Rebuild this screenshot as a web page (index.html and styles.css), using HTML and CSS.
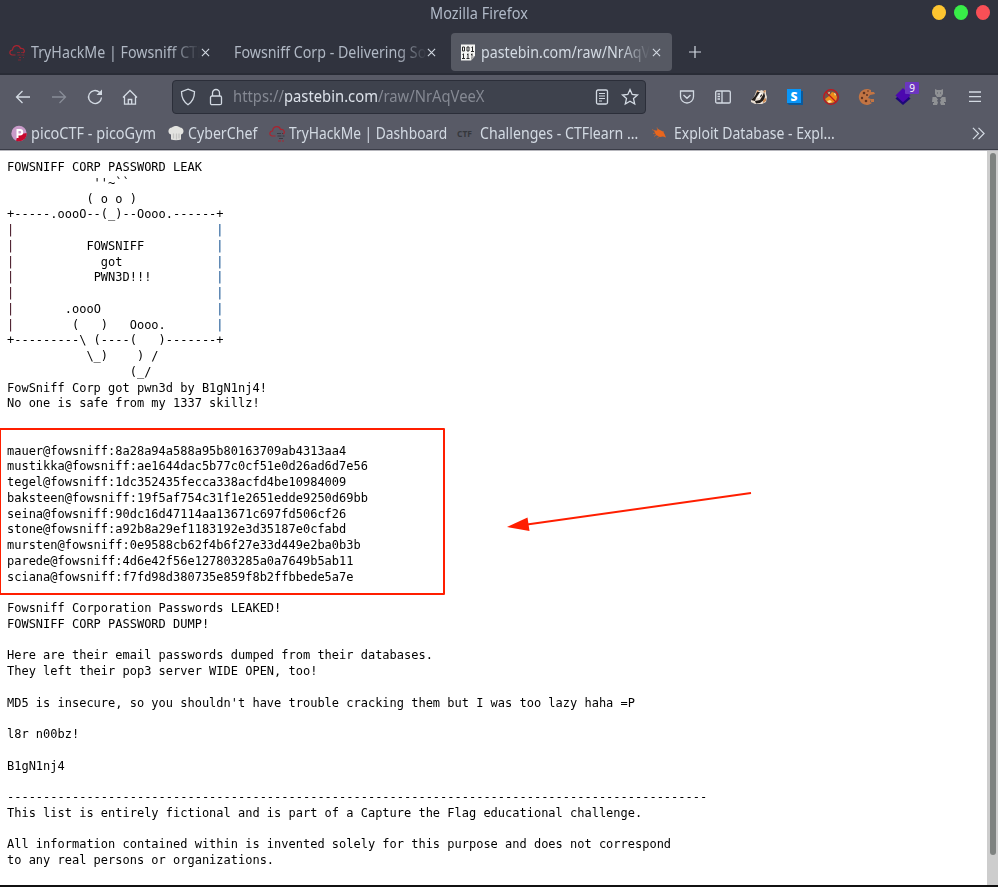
FILE: index.html
```html
<!DOCTYPE html>
<html lang="en">
<head>
<meta charset="utf-8">
<title>Mozilla Firefox</title>
<link rel="stylesheet" href="styles.css">
</head>
<body>
<div class="window">
  <header class="titlebar">
    <span class="title"><span class="t">Mozilla Firefox</span></span>
    <div class="lights"><i class="min"></i><i class="max"></i><i class="close"></i></div>
  </header>

  <nav class="tabs">
    <div class="tab tab-thm">
      <svg class="fav" viewBox="0 0 16 16"><g fill="none" stroke="#a82430" stroke-width="1.200"><path d="M6.500 10.500H3.500C-.2 10.500.2 5.500 3.500 5.500 4 0 10.500-.3 11.500 4 15.500 3.500 16.500 7.500 14 8.500"/><path stroke="#7d2833" d="M8 8h6M8.500 10.500h7M10 13h2m2 0h1M9 15.500h3" stroke-dasharray="3 1"/></g></svg>
      <span class="label"><span class="t">TryHackMe | Fowsniff CTF</span></span>
      <svg class="x" viewBox="0 0 10 10"><path d="M1 1l8 8M9 1l-8 8"/></svg>
    </div>
    <div class="tab tab-corp">
      <span class="label"><span class="t">Fowsniff Corp - Delivering So</span></span>
      <svg class="x" viewBox="0 0 10 10"><path d="M1 1l8 8M9 1l-8 8"/></svg>
    </div>
    <div class="tab tab-paste active">
      <svg class="fav" viewBox="0 0 16 16"><path fill="#f4f4f2" d="M1 0h14v11l-4 5H1z"/><g fill="none" stroke="#292929" stroke-width="1"><path d="M2.500 2.500h2v4h-2zM7 2.500h2v4H7zM12.500 2v5m-1.500 0h3M11.500 3h1M3.500 9v5M2 14h3M2.500 10h1M8 9v5m-1.500 0h3M7 10h1M12 9v3M11 10h1"/></g><path fill="#aaa" d="M11 16v-4h4z"/></svg>
      <span class="label"><span class="t">pastebin.com/raw/NrAqVe</span></span>
      <svg class="x" viewBox="0 0 10 10"><path d="M1 1l8 8M9 1l-8 8"/></svg>
    </div>
    <svg class="plus" viewBox="0 0 12 12"><path d="M6 0v12M0 6h12"/></svg>
  </nav>

  <div class="toolbar">
    <svg class="ic back" viewBox="0 0 16 16"><path d="M15 8H1.500M7.500 2l-6 6 6 6"/></svg>
    <svg class="ic fwd" viewBox="0 0 16 16"><path d="M1 8h13.500M8.500 2l6 6-6 6"/></svg>
    <svg class="ic reload" viewBox="0 0 16 16"><path d="M12.500 3.300A6.500 6.500 0 1 0 14.500 8.500"/><path d="M15 .5v5.500H9.500z" fill="#d3dae3" stroke="none"/></svg>
    <svg class="ic home" viewBox="0 0 16 16"><path d="M1 8.500l7-7 7 7M2.500 7.500v7.700h11V7.500M6.300 15v-4.500h3.400V15"/></svg>
    <div class="urlbar">
      <svg class="ic shield" viewBox="0 0 16 18"><path d="M8 1.200l6.500 2.500c0 6-1.500 9.500-6.500 13-5-3.500-6.500-7-6.500-13z"/></svg>
      <svg class="ic lock" viewBox="0 0 14 18"><rect x="1.500" y="8" width="11" height="8.700" rx="1.500"/><path d="M3.500 8V5a3.500 3.500 0 0 1 7 0v3"/></svg>
      <span class="url"><span class="t">https://<b>pastebin.com</b>/raw/NrAqVeeX</span></span>
      <svg class="ic reader" viewBox="0 0 14 16"><rect x="1.500" y="1" width="11" height="14" rx="1.500"/><path stroke-width="1" d="M4 4.500h6M4 7h6M4 9.500h6M4 12h3"/></svg>
      <svg class="ic star" viewBox="0 0 18 18"><path d="M9 1.500l2.200 5 5.300.5-4 3.600 1.200 5.400L9 13.300 4.300 16l1.200-5.400-4-3.600 5.300-.5z"/></svg>
    </div>
    <div class="exts">
      <svg class="ic" viewBox="0 0 16 16"><path d="M1.500 2h13v5.500a6.500 6.500 0 0 1-13 0zM4.500 6L8 9.300 11.500 6"/></svg>
      <svg class="ic" viewBox="0 0 16 16"><rect x=".7" y="2" width="14.600" height="12" rx="1.200"/><path d="M7 2v12M2.500 5h2.500M2.500 7.500h2.500M2.500 10h2.500"/></svg>
      <svg class="ic solid" viewBox="0 0 16 16"><path fill="#e8ded2" d="M0 11l3-3 2-5 1-2 2 1 3-1 1 1 3-1v4l1 3-1 5-4 2H4l-4-2z"/><path fill="#221d1a" d="M0 11l4-4 2-4 3 0-4 6-1 3zM4 12l5-1 3-5 1-3 1 4-1 4-4 3-4 .5zM9 6l1.500-1 .5 2-2 1z"/><path fill="#c98a55" d="M5 4l1.500-3 1.500 1zM12 2l3-1-1 3zM12 11l3-2v3l-3 2z"/><path fill="#fff" d="M6 9l3-5 2 0-3 5z"/></svg>
      <svg class="ic solid" viewBox="0 0 16 16"><path fill="#0a5a9c" d="M2 2h14v14H2L0 14z"/><path fill="#0996f8" d="M0 0h14v14H0z"/><text x="7" y="11.500" text-anchor="middle" class="s">S</text></svg>
      <svg class="ic solid" viewBox="0 0 16 16"><circle cx="8" cy="8" r="7" fill="#70554b"/><path fill="#ef8c18" d="M2 10l4-3 3-4 3 1 2 4-1 4-4 2H5z"/><path fill="#ffe1a0" d="M4 12l3-1 2 2-3 1zM4 4l3-1-1 3zM11 4l2 1-1 2z"/><circle cx="8" cy="8" r="7.300" fill="none" stroke="#c3161c" stroke-width="1.300"/><path d="M3 3l10 10" stroke="#c3161c" stroke-width="1.300"/></svg>
      <svg class="ic solid" viewBox="0 0 16 16"><path fill="#c27443" d="M9 0A8 8 0 1 0 13 14l-2-1 1-3-3-1 2-3 5-1-1-2h-3V1z"/><g fill="#613421"><circle cx="5" cy="4" r="1.300"/><circle cx="3" cy="9" r="1.200"/><circle cx="8" cy="6" r="1"/><circle cx="7" cy="12" r="1.300"/><circle cx="9" cy="2" r=".8"/></g><path fill="#c27443" d="M12 10h3v3h-3z"/></svg>
      <span class="layers"><svg class="ic solid" viewBox="0 0 16 18"><path fill="#1d0878" d="M0 11l8-7 8 7-8 7z"/><path fill="#4c08af" d="M0 8l8-8 8 8-8 7z"/></svg><b class="badge">9</b></span>
      <svg class="ic solid" viewBox="0 0 16 16"><g fill="#8f9194"><path d="M4 0l2 1h4l2-1v5l-2 3H6L4 5z"/><path d="M1.500 8L5 8l2 2.500-1 1 1 2L6 16H2v-2h1v-1H1zM14.500 8L11 8l-2 2.500 1 1-1 2 1 2.500h4v-2h-1v-1h2z"/></g><path fill="#585a66" d="M6 3.500h1v1H6zM9 3.500h1v1H9z"/></svg>
      <svg class="ic menu" viewBox="0 0 16 16"><path d="M2 3h12M2 7.700h12M2 12.400h12"/></svg>
    </div>
  </div>

  <div class="bookmarks">
    <svg class="fav" viewBox="0 0 16 16"><circle cx="8" cy="8" r="7.700" fill="#c99bc9"/><path fill="#c6092d" d="M15.700 7.500A7.700 7.700 0 0 1 5 15.200L7 9z"/><path d="M6.500 12.500V4.500H9a2.200 2.200 0 0 1 0 4.400H7" fill="none" stroke="#fff" stroke-width="2"/></svg>
    <span class="bm b1"><span class="t">picoCTF - picoGym</span></span>
    <svg class="fav" viewBox="0 0 16 16"><path fill="#e3e3e0" d="M3 14V9C-1 8 0 2 4 2c2-2 6-2 8 0 4 0 5 6 1 7v5c-3 1-7 1-10 0z"/><path stroke="#c4c4c2" fill="none" d="M5.500 8v5M8.500 8v6M11 8v5"/></svg>
    <span class="bm b2"><span class="t">CyberChef</span></span>
    <svg class="fav" viewBox="0 0 16 16"><g fill="none" stroke="#a82430" stroke-width="1.200"><path d="M6.500 10.500H3.500C-.2 10.500.2 5.500 3.500 5.500 4 0 10.500-.3 11.500 4 15.500 3.500 16.500 7.500 14 8.500"/><path stroke="#3c3942" d="M8 8h6M8.500 10.500h7M10 13h5" stroke-dasharray="4 1"/><path d="M9 15.500h6" stroke-dasharray="3 1"/></g></svg>
    <span class="bm b3"><span class="t">TryHackMe | Dashboard</span></span>
    <span class="ctf">CTF</span>
    <span class="bm b4"><span class="t">Challenges - CTFlearn ...</span></span>
    <svg class="fav exploit" viewBox="0 0 16 16"><path fill="#e9661d" d="M2 5l3 0 1-1.500 5 2.500 1.500 2.500L14 12l-3-1-3 .500-4-2z"/><path stroke="#e9661d" stroke-width=".6" d="M1 8l4-1M2 11l4-3M5 2l1 3M12 6l-3 2M5 13l3-3M0 4l4 2"/></svg>
    <span class="bm b5"><span class="t">Exploit Database - Expl...</span></span>
    <svg class="more" viewBox="0 0 14 14"><path d="M1 1l6 6-6 6M7 1l6 6-6 6"/></svg>
  </div>

  <main class="page">
<pre class="dump">FOWSNIFF CORP PASSWORD LEAK
            ''~``
           ( o o )
+-----.oooO--(_)--Oooo.------+
<span class="edge-l">|</span>                            <span class="edge-r">|</span>
<span class="edge-l">|</span>          FOWSNIFF          <span class="edge-r">|</span>
<span class="edge-l">|</span>            got             <span class="edge-r">|</span>
<span class="edge-l">|</span>           PWN3D!!!         <span class="edge-r">|</span>
<span class="edge-l">|</span>                            <span class="edge-r">|</span>
<span class="edge-l">|</span>       .oooO                <span class="edge-r">|</span>
<span class="edge-l">|</span>        (   )   Oooo.       <span class="edge-r">|</span>
+---------\ (----(   )-------+
           \_)    ) /
                 (_/
FowSniff Corp got pwn3d by B1gN1nj4!
No one is safe from my 1337 skillz!


mauer@fowsniff:8a28a94a588a95b80163709ab4313aa4
mustikka@fowsniff:ae1644dac5b77c0cf51e0d26ad6d7e56
tegel@fowsniff:1dc352435fecca338acfd4be10984009
baksteen@fowsniff:19f5af754c31f1e2651edde9250d69bb
seina@fowsniff:90dc16d47114aa13671c697fd506cf26
stone@fowsniff:a92b8a29ef1183192e3d35187e0cfabd
mursten@fowsniff:0e9588cb62f4b6f27e33d449e2ba0b3b
parede@fowsniff:4d6e42f56e127803285a0a7649b5ab11
sciana@fowsniff:f7fd98d380735e859f8b2ffbbede5a7e

Fowsniff Corporation Passwords LEAKED!
FOWSNIFF CORP PASSWORD DUMP!

Here are their email passwords dumped from their databases.
They left their pop3 server WIDE OPEN, too!

MD5 is insecure, so you shouldn't have trouble cracking them but I was too lazy haha =P

l8r n00bz!

B1gN1nj4

-------------------------------------------------------------------------------------------------
This list is entirely fictional and is part of a Capture the Flag educational challenge.

All information contained within is invented solely for this purpose and does not correspond
to any real persons or organizations.</pre>
    <div class="scrollbar"><i></i></div>
    <div class="highlight"></div>
    <svg class="arrow" viewBox="0 0 246 42"><path d="M244 2L20 33.500" stroke="#ff1e00" stroke-width="2"/><path fill="#ff1e00" stroke="none" d="M0 36L20.500 26.500 22.500 40z"/></svg>
  </main>
</div>
</body>
</html>
```

FILE: styles.css
```css
* { box-sizing: border-box; }
body { margin: 0; background: #fff; overflow: hidden; font-family: "Noto Sans", sans-serif; font-size: 16px; color: #d3dae3; }
svg { display: block; flex: none; fill: none; stroke: #d3dae3; stroke-width: 1.3; overflow: visible; }
.window { width: 998px; height: 887px; display: flex; flex-direction: column; }
.t { display: inline-block; white-space: nowrap; transform: scaleX(.905); transform-origin: 0 50%; }
.fav { width: 16px; height: 17px; stroke: none; }

.titlebar { height: 30px; background: #30333e; display: flex; align-items: flex-start; padding: 2px 8px 0 430px; justify-content: space-between; color: #b0b9c7; }
.title { width: 100px; line-height: 22px; }
.lights { display: flex; gap: 8px; padding-top: 3px; }
.lights i { width: 14px; height: 15px; border-radius: 50%; }
.min { background: #fdc530; }
.max { background: #38ed48; }
.close { background: #f94f56; }

.tabs { height: 45px; background: #30333e; border-bottom: 2px solid #292c36; display: flex; padding-top: 3px; color: #b0b8c4; }
.tab { height: 38px; display: flex; align-items: center; border-radius: 4px; }
.tab-thm { width: 220px; padding-left: 9px; }
.tab-corp { width: 225px; padding-left: 14px; }
.tab-paste { width: 221px; padding-left: 9px; margin-left: 6px; }
.active { background: #565963; color: #d3dae3; }
.label { flex: none; overflow: hidden; line-height: 24px; -webkit-mask-image: linear-gradient(90deg, #000 calc(100% - 30px), transparent); mask-image: linear-gradient(90deg, #000 calc(100% - 30px), transparent); }
.label .t { transform: scaleX(.89); }
.tab-thm .label { width: 169px; margin: 0 2px 0 6px; }
.tab-corp .label { width: 193px; }
.tab-paste .label { width: 169px; margin: 0 2px 0 5px; }
.tab-thm .x { margin-left: -1px; }
.x { width: 9px; height: 9px; stroke-width: 1.2; }
.plus { width: 12px; height: 12px; margin: 13px 0 0 17px; stroke-width: 1.2; }

.toolbar { height: 43px; background: #585a66; display: flex; align-items: center; padding-left: 15px; }
.ic { width: 16px; height: 16px; }
.back { margin-right: 20px; }
.fwd { margin-right: 20px; opacity: .4; }
.reload { margin-right: 19px; }
.home { margin-right: 34px; }
.urlbar { flex: 0 0 474px; height: 34px; background: #3e424d; border: 1px solid #2b2e39; border-radius: 4px; display: flex; align-items: center; padding-left: 7px; }
.shield { height: 18px; margin-right: 13px; }
.lock { width: 14px; height: 18px; margin-right: 10px; }
.url { width: 362px; line-height: 24px; margin-top: -1px; color: #858993; }
.url .t { transform: scaleX(.924); }
.url b { font-weight: 400; color: #dce1e9; }
.reader { width: 14px; margin-right: 12px; }
.star { width: 18px; height: 18px; }
.solid { stroke: none; }
.exts { display: flex; gap: 20px; padding-left: 33px; align-items: center; }
.s { font: 800 12px "Open Sans", sans-serif; fill: #fff; }
.layers { position: relative; }
.layers .ic { height: 17px; }
.badge { position: absolute; left: 10px; top: -6px; width: 14px; height: 12px; border-radius: 1px; background: #6b36c0; color: #fff; font: 10px/12px "Noto Sans", sans-serif; text-align: center; }

.bookmarks { height: 32px; background: #585a66; border-bottom: 1px solid #3a3c47; display: flex; align-items: center; padding-left: 11px; }
.bm { flex: none; line-height: 24px; margin: -2px 0 0 4px; }
.b1 { width: 137px; }
.b2 { width: 81px; }
.b3 { width: 169px; }
.b3 .t { transform: scaleX(.862); }
.b4 { width: 172px; margin-left: 6px; }
.b4 .t { transform: scaleX(.884); }
.b5 { width: 298px; margin-left: 6px; }
.b5 .t { transform: scaleX(.876); }
.b2 .t { transform: scaleX(.885); }
.ctf { width: 16px; margin-left: -1px; margin-right: 1px; font: 700 8.5px "Open Sans", sans-serif; color: #35373c; }
.more { width: 13px; height: 13px; }

.page { position: relative; height: 737px; background: #fff; border-top: 1px solid #b7b7bd; border-bottom: 2px solid #111; display: flex; justify-content: space-between; }
.dump { margin: 8px 0 0 7px; font: 12.6px/15.75px "DejaVu Sans Mono", monospace; color: #000; transform: scaleX(.952); transform-origin: 0 0; }
.edge-l { color: #3a0818; }
.edge-r { color: #0a4a8c; }
.scrollbar { flex: none; width: 11px; background: #cdcdcd; padding: 2px 2px 0 3px; }
.scrollbar i { display: block; width: 6px; height: 702px; border-radius: 3px; background: #7e8280; }
.highlight { position: absolute; left: -1px; top: 277px; width: 446px; height: 167px; border: 2px solid #ff1e00; border-radius: 1px; }
.arrow { position: absolute; left: 507px; top: 340px; width: 246px; height: 42px; }
```
